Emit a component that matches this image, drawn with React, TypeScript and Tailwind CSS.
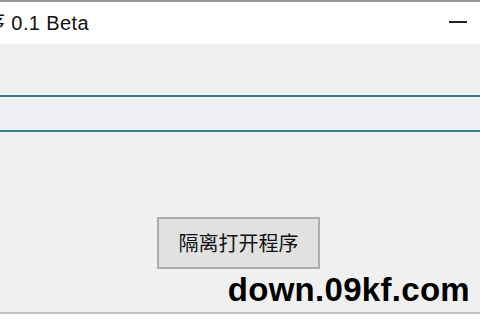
export default function App() {
  return (
    <div className="w-[480px] h-[320px] overflow-hidden bg-[#f0f0f0] flex flex-col font-['Liberation_Sans','Noto_Sans_CJK_SC',sans-serif]">
      <div className="h-[2px] bg-[#9a9a9a]" />
      <div className="h-[42px] bg-white flex items-center justify-between">
        <span className="-ml-[15px] text-[20px] text-[#111] mt-[0px] whitespace-nowrap tracking-[0.4px]">序 0.1 Beta</span>
        <div className="w-[18px] h-[2px] bg-[#222] mr-[13px] mt-[-3px]" />
      </div>
      <div className="h-[50px]" />
      <div className="h-[1px] bg-[#e6fbfb]" />
      <div className="h-[2px] bg-[#4b7580]" />
      <div className="h-[1px] bg-[#e6fbfb]" />
      <div className="h-[31px] bg-[#efeef2]" />
      <div className="h-[1px] bg-[#d8fafa]" />
      <div className="h-[2px] bg-[#4b7580]" />
      <div className="h-[1px] bg-[#e6fbfb]" />
      <div className="flex-1 flex flex-col items-center pt-[84px]">
        <button className="w-[163px] h-[52px] bg-[#e1e1e1] border-2 border-[#adadad] text-[20px] text-[#111] font-['Noto_Sans_CJK_SC',sans-serif] mr-[3px]">
          隔离打开程序
        </button>
      </div>
      <div className="h-[42px] flex items-end justify-end pr-[10px] pb-[6px] border-b-[2px] border-[#c4c4c4] mt-[-30px]">
        <span className="text-[33px] font-bold text-black leading-none tracking-[0.3px]">down.09kf.com</span>
      </div>
      <div className="h-[6px] bg-white" />
    </div>
  );
}
